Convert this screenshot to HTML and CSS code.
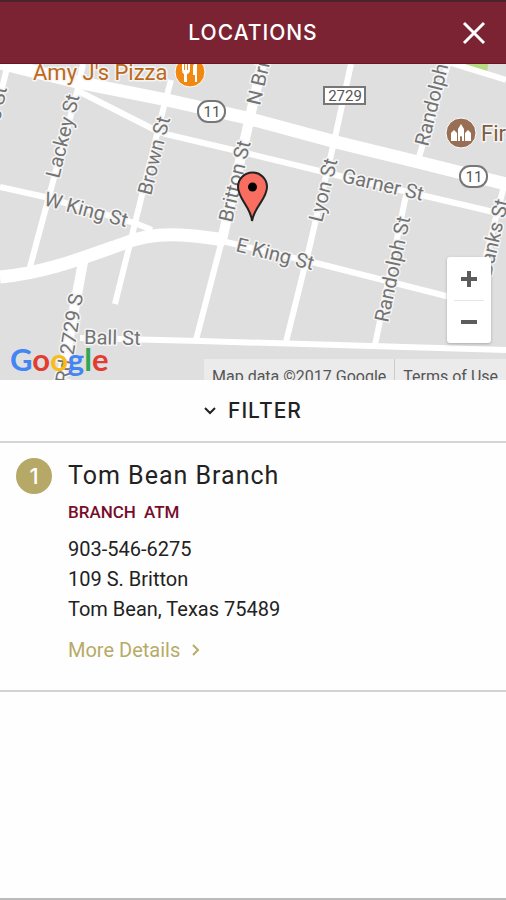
FILE: index.html
```html
<!DOCTYPE html>
<html lang="en">
<head>
<meta charset="utf-8">
<meta name="viewport" content="width=device-width, initial-scale=1">
<title>Locations</title>
<link rel="stylesheet" href="styles.css">
</head>
<body>
<header class="bar">
  <h1 class="bar-title">LOCATIONS</h1>
  <button class="close" type="button" aria-label="Close">
    <svg viewBox="0 0 24 24" width="24" height="24" aria-hidden="true"><path d="M2 2 22 22M22 2 2 22"/></svg>
  </button>
</header>
<main class="page">
  <section class="map" aria-label="Map">
    <svg class="map-art" viewBox="0 64 506 316" preserveAspectRatio="xMidYMid slice">
      <rect class="land" y="64" width="506" height="316"/>
      <path class="park" d="M452 60H489L487 72Z"/>
      <g class="road">
        <path d="M445 61 506 80"/>
        <path d="M8 64 0 96"/>
        <path d="M83 64 77 92 30 267"/>
        <path d="M78 91 155 130 165 134 250 154 340 176 485 210 506 215"/>
        <path d="M171 80 163 110 115 304"/>
        <path d="M222 240 196 340"/>
        <path d="M351 64 334 142 310 245 286 342"/>
        <path d="M448 64 418 160"/>
        <path d="M406 195 375 345"/>
        <path d="M506 178 485 260"/>
        <path d="M0 187 45 197 135 223 152 230"/>
        <path d="M222 241 320 264 450 297"/>
        <path d="M80 338 200 341 506 350"/>
      </g>
      <g class="road road-mid">
        <path d="M262 64 222 240"/>
        <path d="M83 262 61 380"/>
      </g>
      <g class="road road-main">
        <path d="M0 63 77 82 167 100 247 118 336 142 418 162 506 184"/>
        <path d="M0 277C45 273 80 259 125 243 155 231 185 234 225 240"/>
      </g>
      <g class="street">
        <text transform="translate(0 121) rotate(-78)">s St</text>
        <text transform="translate(59 179) rotate(-76)">Lackey St</text>
        <text transform="translate(151 196) rotate(-76)">Brown St</text>
        <text transform="translate(232 223) rotate(-77)">Britton St</text>
        <text transform="translate(260 106) rotate(-77)">N Britton St</text>
        <text transform="translate(322 223) rotate(-76)">Lyon St</text>
        <text transform="translate(428 147) rotate(-76)">Randolph St</text>
        <text transform="translate(388 323) rotate(-78)">Randolph St</text>
        <text transform="translate(491 277) rotate(-77)">Banks St</text>
        <text transform="translate(43 205) rotate(15)">W King St</text>
        <text transform="translate(235 251) rotate(14)">E King St</text>
        <text transform="translate(341 182) rotate(13)">Garner St</text>
        <text transform="translate(84 344) rotate(1)">Ball St</text>
        <text transform="translate(69 384) rotate(-81)">Rd 2729 S</text>
      </g>
      <g class="shield">
        <rect x="198" y="101" width="27" height="21" rx="10"/>
        <text x="212" y="117">11</text>
        <rect x="460" y="166" width="27" height="21" rx="10"/>
        <text x="474" y="182">11</text>
        <rect x="324" y="87" width="41" height="17"/>
        <text x="345" y="101">2729</text>
      </g>
      <text class="place place-food" x="33" y="80">Amy J's Pizza</text>
      <circle class="food" cx="190" cy="72" r="15"/>
      <g class="glyph">
        <path d="M182 64v6q0 3 2 4v8h3v-8q3-1 3-4v-6h-2v6h-1v-6h-2v6h-1v-6ZM193 66q0-2 4-3v19h-2v-7h-2Z"/>
      </g>
      <text class="place place-civic" x="481" y="141">First</text>
      <circle class="civic" cx="461" cy="133" r="15"/>
      <path class="glyph" d="M451 141v-8l3-3 3 3v8ZM458 141v-12l3-5 3 5v12h-2v-4q-1-2-2 0v4ZM465 141v-8l3-3 3 3v8Z"/>
      <path class="pin" d="M252 221C251 207 238 199 238 187A14.500 14.500 0 0 1 267 187C267 199 254 207 252 221Z"/>
      <circle cx="252.500" cy="187" r="4.500"/>
    </svg>
    <a class="logo" href="#" aria-label="Google"><span class="g-blue">G</span><span class="g-red">o</span><span class="g-yellow">o</span><span class="g-blue">g</span><span class="g-green">l</span><span class="g-red">e</span></a>
    <div class="credits"><span class="credit">Map data ©2017 Google</span><a class="credit" href="#">Terms of Use</a></div>
    <div class="zoom">
      <button class="zoom-btn" type="button" aria-label="Zoom in"><svg viewBox="0 0 16 16" width="16" height="16" aria-hidden="true"><path d="M0 8H16M8 0V16"/></svg></button>
      <button class="zoom-btn" type="button" aria-label="Zoom out"><svg viewBox="0 0 16 16" width="16" height="16" aria-hidden="true"><path d="M0 8H16"/></svg></button>
    </div>
  </section>
  <button class="filter" type="button">
    <svg viewBox="0 0 12 8" width="12" height="8" aria-hidden="true"><path d="M1 1 6 6 11 1"/></svg>
    FILTER
  </button>
  <article class="branch">
    <span class="number">1</span>
    <div class="info">
      <h2 class="name">Tom Bean Branch</h2>
      <p class="tags"><span>BRANCH</span><span>ATM</span></p>
      <address class="address">903-546-6275<br>109 S. Britton<br>Tom Bean, Texas 75489</address>
      <a class="more" href="#">More Details
        <svg viewBox="0 0 8 12" width="8" height="12" aria-hidden="true"><path d="M1 1 6 6 1 11"/></svg>
      </a>
    </div>
  </article>
</main>
</body>
</html>
```
FILE: styles.css
```css
* { box-sizing: border-box; }
body {
  margin: 0;
  min-height: 100vh;
  display: flex;
  flex-direction: column;
  background: #fefefe;
  color: #222;
  font-family: Roboto, "Liberation Sans", sans-serif;
}
button { border: 0; padding: 0; background: none; color: inherit; font: inherit; cursor: pointer; }
h1, h2, p { margin: 0; }
a { text-decoration: none; }

.bar {
  display: grid;
  grid-template-columns: 64px 1fr 64px;
  align-items: center;
  height: 64px;
  border-top: 2px solid #4b222b;
  border-bottom: 1px solid #6d1422;
  background: #7b2333;
  color: #fff;
}
.bar-title {
  grid-column: 2;
  text-align: center;
  font: 500 21px/28px Inter, sans-serif;
  letter-spacing: 1px;
}
.close { display: grid; place-items: center; height: 48px; }
.close path { fill: none; stroke: #fff; stroke-width: 3; }

.page { flex: 1; border-bottom: 2px solid #bbb; }

.map { position: relative; height: 316px; overflow: hidden; background: #dfdfdf; }
.map-art { display: block; width: 100%; height: 100%; }
.land { fill: #dfdfdf; }
.park { fill: #b5dc83; }
.road { fill: none; stroke: #fff; stroke-width: 6; }
.road-mid { stroke-width: 10; }
.road-main { stroke-width: 13; }
.street text, .place {
  font-size: 20px;
  fill: #737373;
  stroke: #f5f5f5;
  stroke-width: 3;
  stroke-linejoin: round;
  paint-order: stroke;
}
.street .place, .place { font-size: 22px; }
.place-food { fill: #bd691b; }
.place-civic { fill: #805b40; }
.food { fill: #f08812; stroke: #fff; }
.civic { fill: #986f54; stroke: #fff; }
.glyph { fill: #fff; }
.shield rect { fill: #fff; stroke: #777; stroke-width: 2; }
.shield text { font-size: 15px; text-anchor: middle; fill: #555; }
.pin { fill: #fa6e61; stroke: #222; stroke-width: 2; }

.logo {
  position: absolute;
  left: 10px;
  bottom: 3px;
  font: 700 31px/36px Lato, sans-serif;
}
.g-blue { color: #4285f4; }
.g-red { color: #e33c30; }
.g-yellow { color: #f9bb15; }
.g-green { color: #31a655; }

.credits {
  position: absolute;
  right: 0;
  bottom: 0;
  display: flex;
  height: 21px;
  overflow: hidden;
  background: #ebebeb;
  font-size: 16px;
  line-height: 35px;
}
.credit { padding: 0 8px; color: #555; }
.credit + .credit { border-left: 1px solid #ccc; }

.zoom {
  position: absolute;
  right: 15px;
  bottom: 37px;
  width: 44px;
  border-radius: 3px;
  background: #fff;
  box-shadow: 0 1px 3px #aaa;
}
.zoom-btn { display: grid; place-items: center; width: 100%; height: 43px; }
.zoom-btn + .zoom-btn::before { content: ""; width: 30px; height: 1px; background: #e6e6e6; }
.zoom-btn + .zoom-btn { grid-template-rows: 1px 1fr; }
.zoom-btn path { stroke: #5c5c5c; stroke-width: 4; }

.filter {
  display: flex;
  align-items: center;
  justify-content: center;
  gap: 12px;
  width: 100%;
  height: 63px;
  border-bottom: 2px solid #d5d5d5;
  font: 500 21px/28px Inter, sans-serif;
  letter-spacing: 1px;
}
.filter path, .more path { fill: none; stroke: currentColor; stroke-width: 2; }

.branch {
  display: flex;
  gap: 16px;
  padding: 15px 16px 25px;
  border-bottom: 2px solid #d2d2d2;
}
.number {
  flex: none;
  width: 36px;
  height: 36px;
  border-radius: 50%;
  background: #b6a866;
  color: #fff;
  font: 500 22px/36px Inter, sans-serif;
  text-align: center;
}
.name { font-size: 25px; font-weight: 400; line-height: 36px; letter-spacing: 1px; }
.tags { display: flex; gap: 8px; color: #780d2a; font-size: 17px; font-weight: 500; line-height: 36px; }
.address { margin-top: 4px; font-size: 20px; font-style: normal; line-height: 30px; }
.more {
  display: flex;
  align-items: center;
  gap: 12px;
  margin-top: 11px;
  color: #b6ab67;
  font-size: 20px;
  line-height: 30px;
}
```
